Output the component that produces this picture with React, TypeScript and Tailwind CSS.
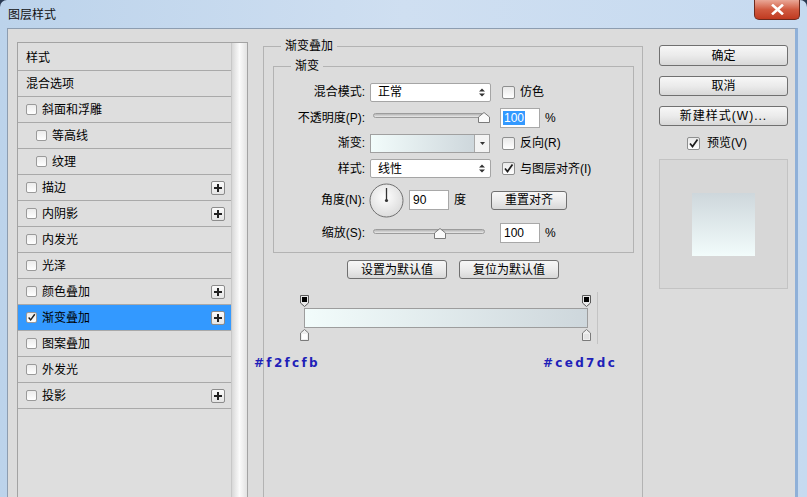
import React from "react";

type Item = {
  label: string;
  kind: "head" | "cb";
  indent?: boolean;
  plus?: boolean;
  checked?: boolean;
  active?: boolean;
};

const items: Item[] = [
  { label: "样式", kind: "head" },
  { label: "混合选项", kind: "head" },
  { label: "斜面和浮雕", kind: "cb" },
  { label: "等高线", kind: "cb", indent: true },
  { label: "纹理", kind: "cb", indent: true },
  { label: "描边", kind: "cb", plus: true },
  { label: "内阴影", kind: "cb", plus: true },
  { label: "内发光", kind: "cb" },
  { label: "光泽", kind: "cb" },
  { label: "颜色叠加", kind: "cb", plus: true },
  { label: "渐变叠加", kind: "cb", plus: true, checked: true, active: true },
  { label: "图案叠加", kind: "cb" },
  { label: "外发光", kind: "cb" },
  { label: "投影", kind: "cb", plus: true },
];

const btn =
  "flex items-center justify-center border border-[#707070] rounded-[3px] bg-gradient-to-b from-[#f7f7f7] via-[#ebebeb] to-[#d8d8d8] text-[12px] text-black leading-none";

const Check = ({ size = 11 }: { size?: number }) => (
  <svg width={size} height={size} viewBox="0 0 11 11">
    <path d="M2 5.5 L4.5 8.5 L9.5 1.5" stroke="#1d1d1d" strokeWidth="1.7" fill="none" />
  </svg>
);

const Box = ({ checked }: { checked?: boolean }) => (
  <span className="w-[13px] h-[13px] shrink-0 border border-[#8e8f8f] rounded-[2px] bg-gradient-to-b from-[#e9e9e9] to-[#ffffff] flex items-center justify-center">
    {checked && <Check />}
  </span>
);

const UpDown = () => (
  <svg width="6" height="9" viewBox="0 0 6 9">
    <path d="M0 3.5 L3 0.5 L6 3.5 Z M0 5.5 L3 8.5 L6 5.5 Z" fill="#333" />
  </svg>
);

const Thumb = () => (
  <svg width="12" height="11" viewBox="0 0 12 11">
    <path d="M0.5 10.5 V5 L6 0.5 L11.5 5 V10.5 Z" fill="#fafafa" stroke="#7a7a7a" />
  </svg>
);

const Slider = ({ thumb }: { thumb: number }) => (
  <div className="relative w-[121px] h-[19px]">
    <div className="absolute left-[3px] top-[5px] w-[112px] h-[5px] rounded-full border border-[#9c9c9c] bg-gradient-to-b from-[#b5b5b5] to-[#e9e9e9]" />
    <div className="absolute top-[4px]" style={{ left: thumb }}>
      <Thumb />
    </div>
  </div>
);

const Select = ({ value }: { value: string }) => (
  <div className="w-[121px] h-[19px] bg-white border border-[#a5a5a5] rounded-[2px] flex items-center pl-[7px] pr-[5px]">
    <span>{value}</span>
    <span className="ml-auto flex">
      <UpDown />
    </span>
  </div>
);

const TopStop = () => (
  <svg width="9" height="12" viewBox="0 0 9 12">
    <path d="M0.5 0.5 H8.5 V8 L4.5 11.5 L0.5 8 Z" fill="#e8e8e8" stroke="#5a5a5a" />
    <rect x="2" y="2" width="5" height="5" fill="#000" />
  </svg>
);

const BottomStop = ({ fill }: { fill: string }) => (
  <svg width="9" height="12" viewBox="0 0 9 12">
    <path d="M0.5 11.5 V4 L4.5 0.5 L8.5 4 V11.5 Z" fill="#efefef" stroke="#7a7a7a" />
    <rect x="2" y="5" width="5" height="5" fill={fill} />
  </svg>
);

const Dial = () => (
  <svg width="35" height="35" viewBox="0 0 35 35">
    <defs>
      <radialGradient id="dialg" cx="0.45" cy="0.4" r="0.6">
        <stop offset="0" stopColor="#ffffff" />
        <stop offset="1" stopColor="#dcdcdc" />
      </radialGradient>
    </defs>
    <circle cx="17.5" cy="17.5" r="16.5" fill="url(#dialg)" stroke="#6f6f6f" />
    <line x1="17.5" y1="17.5" x2="17.5" y2="5" stroke="#333" strokeWidth="1.3" />
    <circle cx="17.5" cy="17.5" r="1.6" fill="#333" />
  </svg>
);

const App = () => {
  return (
    <div className="w-[807px] h-[497px] overflow-hidden bg-[#2a3a52] font-['Liberation_Sans','Noto_Sans_CJK_SC',sans-serif] text-[12px] text-black">
      <div className="h-full rounded-t-[7px] bg-gradient-to-r from-[#bcd3eb] via-[#cfdff1] to-[#c6daf0] flex flex-col pl-[7px] pr-[9px]">
        {/* title bar */}
        <div className="h-[28px] flex items-start shrink-0">
          <span className="pt-[6px] pl-[1px] text-[12px] text-[#111]">图层样式</span>
          <div className="ml-auto mr-[-2px] w-[46px] h-[20px] rounded-b-[5px] border border-t-0 border-[#6e2a1d] bg-gradient-to-b from-[#e9a797] via-[#d05a40] to-[#c0391f] flex items-center justify-center">
            <svg width="13" height="11" viewBox="0 0 13 11">
              <path d="M2 1.5 L11 9.5 M11 1.5 L2 9.5" stroke="#fff" strokeWidth="2.6" strokeLinecap="square" />
            </svg>
          </div>
        </div>

        {/* dialog body */}
        <div className="flex-1 bg-[#dcdcdc] border-l border-t border-r-[3px] border-l-[#8d9db0] border-t-[#8d9db0] border-r-[#8fb0d8] flex items-start pl-[9px] pt-[13px]">
          {/* left style list */}
          <div className="w-[231px] h-[470px] border-l border-t border-r border-[#a3a3a3] flex shrink-0">
            <div className="w-[213px] pt-[2px] bg-[#dedede]">
              {items.map((it, i) => (
                <div
                  key={i}
                  className={`h-[26px] flex items-center border-b border-[#a9a9a9] pr-[6px] ${
                    it.active ? "bg-[#3399ff]" : ""
                  } ${it.indent ? "pl-[18px]" : "pl-[8px]"}`}
                >
                  {it.kind === "cb" && (
                    <span className="w-[11px] h-[11px] mr-[5px] border border-[#9a9a9a] rounded-[2px] bg-gradient-to-b from-[#ececec] to-[#ffffff] flex items-center justify-center">
                      {it.checked && <Check size={9} />}
                    </span>
                  )}
                  <span>{it.label}</span>
                  {it.plus && (
                    <span className="ml-auto w-[14px] h-[14px] border border-[#8c8c8c] rounded-[2px] bg-gradient-to-b from-[#fbfbfb] to-[#e4e4e4] flex items-center justify-center">
                      <svg width="8" height="8" viewBox="0 0 8 8">
                        <path d="M4 0 V8 M0 4 H8" stroke="#222" strokeWidth="2" />
                      </svg>
                    </span>
                  )}
                </div>
              ))}
            </div>
            <div className="w-[16px] bg-gradient-to-r from-[#d8d8d8] via-[#fbfbfb] to-[#e2e2e2] border-l border-[#c8c8c8]" />
          </div>

          {/* middle panel */}
          <fieldset className="ml-[15px] mt-[-4px] w-[380px] h-[480px] border border-[#b3b3b3] shrink-0">
            <legend className="ml-[17px] px-[4px] leading-[16px]">渐变叠加</legend>

            <fieldset className="ml-[9px] mr-[8px] mt-[4px] border border-[#b3b3b3] pb-[5px]">
              <legend className="ml-[17px] px-[4px] leading-[16px]">渐变</legend>
              <div className="pt-[5px]">
                <div className="flex items-center h-[26px]">
                  <span className="w-[91px] text-right">混合模式:</span>
                  <div className="ml-[5px]">
                    <Select value="正常" />
                  </div>
                  <span className="ml-[11px]">
                    <Box />
                  </span>
                  <span className="ml-[5px]">仿色</span>
                </div>

                <div className="flex items-center h-[25px]">
                  <span className="w-[91px] text-right">不透明度(P):</span>
                  <div className="ml-[5px]">
                    <Slider thumb={108} />
                  </div>
                  <div className="ml-[9px] w-[40px] h-[20px] bg-white border border-[#a8a8a8] flex items-center pl-[2px]">
                    <span className="bg-[#3399ff] text-white leading-[14px] px-[1px]">100</span>
                  </div>
                  <span className="ml-[5px]">%</span>
                </div>

                <div className="flex items-center h-[26px]">
                  <span className="w-[91px] text-right">渐变:</span>
                  <div className="ml-[5px] w-[120px] h-[19px] border border-[#a0a0a0] flex">
                    <div className="flex-1 bg-gradient-to-r from-[#f2fcfb] to-[#ced7dc]" />
                    <div className="w-[15px] border-l border-[#a8a8a8] bg-[#f3f3f3] flex items-center justify-center">
                      <svg width="5" height="3" viewBox="0 0 5 3">
                        <path d="M0 0 H5 L2.5 3 Z" fill="#333" />
                      </svg>
                    </div>
                  </div>
                  <span className="ml-[12px]">
                    <Box />
                  </span>
                  <span className="ml-[5px]">反向(R)</span>
                </div>

                <div className="flex items-center h-[25px]">
                  <span className="w-[91px] text-right">样式:</span>
                  <div className="ml-[5px]">
                    <Select value="线性" />
                  </div>
                  <span className="ml-[11px]">
                    <Box checked />
                  </span>
                  <span className="ml-[5px]">与图层对齐(I)</span>
                </div>

                <div className="flex items-center h-[38px]">
                  <span className="w-[91px] text-right">角度(N):</span>
                  <div className="ml-[4px] flex">
                    <Dial />
                  </div>
                  <div className="ml-[5px] w-[40px] h-[20px] bg-white border border-[#a8a8a8] flex items-center pl-[3px]">
                    90
                  </div>
                  <span className="ml-[5px]">度</span>
                  <div className={`${btn} ml-[25px] w-[76px] h-[19px]`}>重置对齐</div>
                </div>

                <div className="flex items-center h-[28px]">
                  <span className="w-[91px] text-right">缩放(S):</span>
                  <div className="ml-[5px]">
                    <Slider thumb={64} />
                  </div>
                  <div className="ml-[9px] w-[40px] h-[20px] bg-white border border-[#a8a8a8] flex items-center pl-[3px]">
                    100
                  </div>
                  <span className="ml-[5px]">%</span>
                </div>
              </div>
            </fieldset>

            <div className="flex justify-center gap-[12px] mt-[7px]">
              <div className={`${btn} w-[100px] h-[19px]`}>设置为默认值</div>
              <div className={`${btn} w-[100px] h-[19px]`}>复位为默认值</div>
            </div>

            {/* gradient editor */}
            <div className="relative h-[52px] mt-[13px]">
              <div className="absolute left-[36px] top-[3px]">
                <TopStop />
              </div>
              <div className="absolute left-[318px] top-[3px]">
                <TopStop />
              </div>
              <div className="ml-[40px] pt-[16px]">
                <div className="w-[284px] h-[20px] border border-[#9d9d9d] bg-gradient-to-r from-[#f2fcfb] to-[#ced7dc]" />
              </div>
              <div className="absolute left-[36px] top-[37px]">
                <BottomStop fill="#ffffff" />
              </div>
              <div className="absolute left-[318px] top-[37px]">
                <BottomStop fill="#e4e4e4" />
              </div>
              <div className="absolute left-[333px] top-0 w-px h-[52px] bg-[#c4c4c4]" />
              <span className="absolute left-[-10px] top-[62px] font-['DejaVu_Sans',sans-serif] font-bold text-[12px] tracking-[2.3px] text-[#1f1fb8]">
                #f2fcfb
              </span>
              <span className="absolute left-[279px] top-[62px] font-['DejaVu_Sans',sans-serif] font-bold text-[12px] tracking-[2.3px] text-[#1f1fb8]">
                #ced7dc
              </span>
            </div>
          </fieldset>

          {/* right column */}
          <div className="ml-[16px] mt-[3px] w-[129px] flex flex-col shrink-0">
            <div className={`${btn} h-[21px] border-[#3c3c3c]`}>确定</div>
            <div className={`${btn} h-[20px] mt-[10px]`}>取消</div>
            <div className={`${btn} h-[20px] mt-[10px] tracking-[1px]`}>新建样式(W)...</div>
            <div className="h-[16px] mt-[9px] flex items-center pl-[28px]">
              <Box checked />
              <span className="ml-[7px]">预览(V)</span>
            </div>
            <div className="mt-[8px] h-[130px] border border-[#c3c3c3] bg-[#d7d7d7] flex items-center justify-center">
              <div className="w-[63px] h-[63px] bg-gradient-to-b from-[#ced7dc] to-[#f2fcfb]" />
            </div>
          </div>
        </div>
      </div>
    </div>
  );
};

export default App;
